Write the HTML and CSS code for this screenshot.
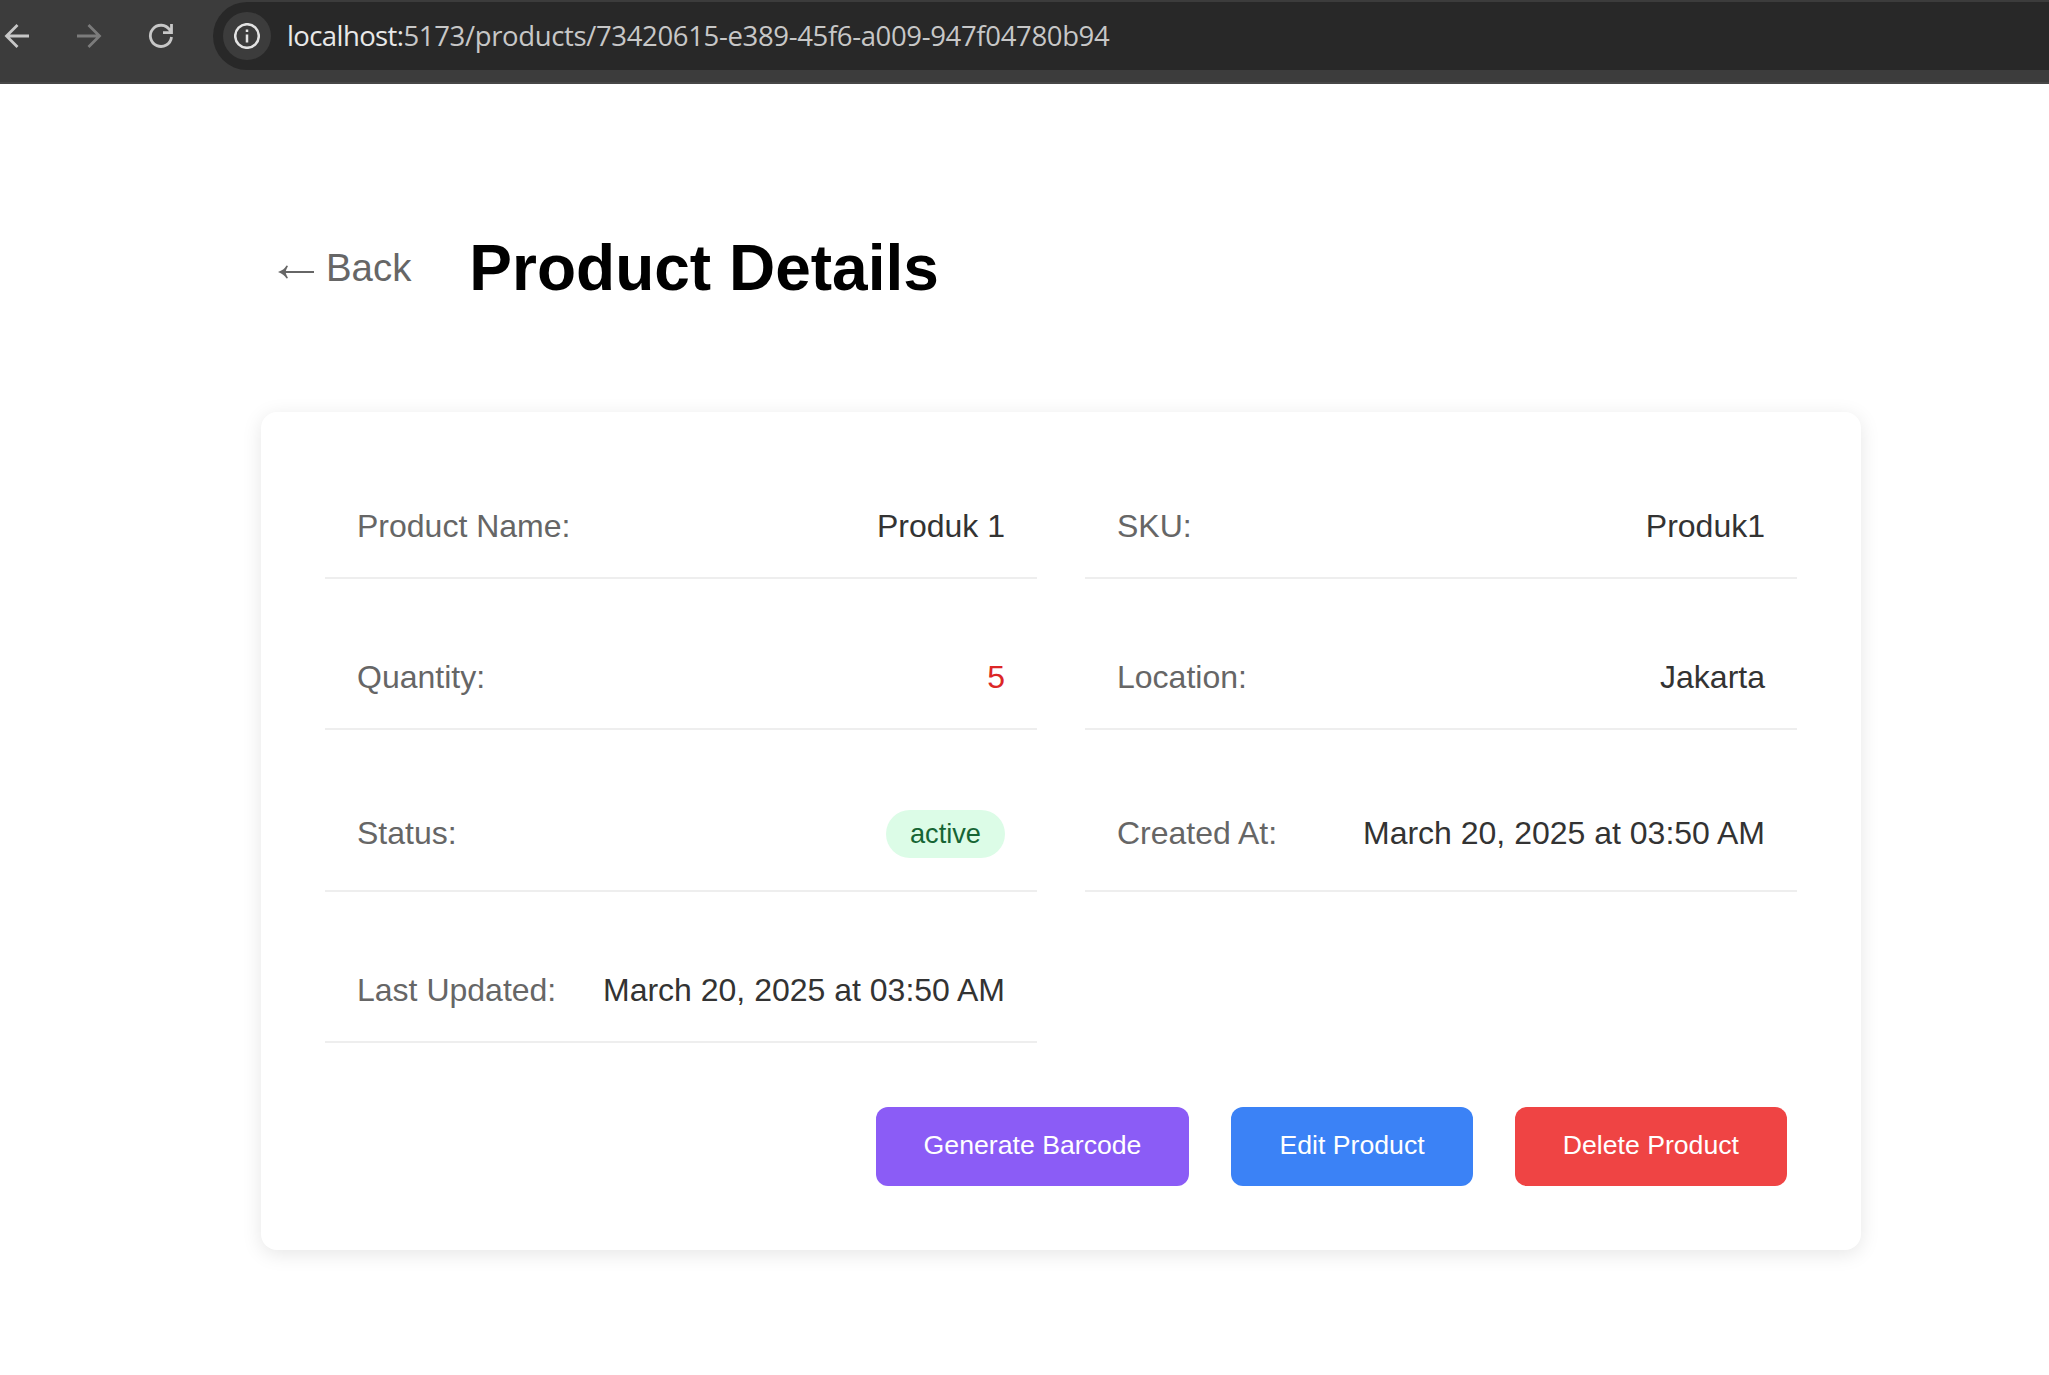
FILE: index.html
```html
<!DOCTYPE html>
<html lang="en">
<head>
<meta charset="utf-8">
<title>Product Details</title>
<link rel="stylesheet" href="styles.css">
</head>
<body>
<header class="toolbar">
  <nav class="nav">
    <svg class="nav-icon" viewBox="0 0 24 24"><path d="M24 12H2M12.5 1 1.5 12l11 11"/></svg>
    <svg class="nav-icon nav-icon-off" viewBox="0 0 24 24"><path d="M0 12h22M11.500 1l11 11-11 11"/></svg>
    <svg class="nav-icon" viewBox="0 0 24 24"><path d="M22.500 13A10.600 10.600 0 1 1 20.800 6L22.500 8.600M22.500 0v8.600H14"/></svg>
  </nav>
  <div class="omnibox">
    <span class="site-info">
      <svg class="info-icon" viewBox="0 0 26 26"><circle cx="13" cy="13" r="11.800"/><path d="M13 11.500V19.500M13 6.500V9"/></svg>
    </span>
    <span class="url"><span class="host">localhost:</span>5173/products/73420615-e389-45f6-a009-947f04780b94</span>
  </div>
</header>
<main class="page">
  <div class="page-head">
    <a class="back"><svg class="back-arrow" viewBox="0 0 38 14"><path class="shaft" d="M5 7h32"/><path class="tip" d="M1 7Q7 5 9.500 0.500L11 1Q9 4.500 8.500 7Q9 9.500 11 13L9.500 13.500Q7 9 1 7Z"/></svg>Back</a>
    <h1 class="title">Product Details</h1>
  </div>
  <section class="card">
    <div class="details">
      <div class="item"><span class="label">Product Name:</span><span class="value">Produk 1</span></div>
      <div class="item"><span class="label">SKU:</span><span class="value">Produk1</span></div>
      <div class="item"><span class="label">Quantity:</span><span class="value low">5</span></div>
      <div class="item"><span class="label">Location:</span><span class="value">Jakarta</span></div>
      <div class="item item-tall"><span class="label">Status:</span><span class="badge">active</span></div>
      <div class="item item-tall"><span class="label">Created At:</span><span class="value">March 20, 2025 at 03:50 AM</span></div>
      <div class="item"><span class="label">Last Updated:</span><span class="value">March 20, 2025 at 03:50 AM</span></div>
    </div>
    <div class="actions">
      <button class="btn btn-barcode">Generate Barcode</button>
      <button class="btn btn-edit">Edit Product</button>
      <button class="btn btn-delete">Delete Product</button>
    </div>
  </section>
</main>
</body>
</html>
```
FILE: styles.css
```css
* { box-sizing: border-box; }
body {
  margin: 0;
  min-height: 100vh;
  background: #fff;
  color: #000;
  font-family: "Liberation Sans", Arial, sans-serif;
}
.toolbar {
  display: flex;
  height: 84px;
  padding-top: 2px;
  background: #3c3c3c;
  border-bottom: 2px solid #474747;
}
.nav {
  display: flex;
  align-items: center;
  gap: 48px;
  width: 213px;
  height: 68px;
  padding-left: 5px;
}
.nav-icon {
  width: 24px;
  height: 24px;
  fill: none;
  stroke: #c7c7c7;
  stroke-width: 2.8;
  overflow: visible;
}
.nav-icon-off { stroke: #7b7b7b; }
.omnibox {
  display: flex;
  flex: 1;
  align-items: center;
  gap: 16px;
  height: 68px;
  padding-left: 10px;
  background: #282828;
  border-radius: 34px 0 0 34px;
}
.site-info {
  display: flex;
  align-items: center;
  justify-content: center;
  width: 48px;
  height: 48px;
  border-radius: 50%;
  background: #3c3c3c;
}
.info-icon {
  width: 26px;
  height: 26px;
  fill: none;
  stroke: #e3e3e3;
  stroke-width: 2.5;
}
.url {
  color: #c7c7c7;
  font-family: "Open Sans", "Noto Sans", sans-serif;
  font-size: 27.5px;
  line-height: 36px;
  letter-spacing: -0.35px;
  white-space: nowrap;
}
.host {
  color: #e8e8e8;
  letter-spacing: -0.6px;
}
.page {
  width: 1600px;
  margin-left: 261px;
  padding-top: 144px;
}
.page-head {
  display: flex;
  align-items: center;
  gap: 42px;
  height: 80px;
  margin-bottom: 104px;
}
.back {
  display: flex;
  align-items: center;
  gap: 11px;
  padding: 0 16px;
  color: #666;
  font-size: 38.4px;
  white-space: nowrap;
}
.back-arrow {
  width: 38px;
  height: 14px;
  margin-top: 7px;
}
.shaft {
  fill: none;
  stroke: #666;
  stroke-width: 2;
}
.tip { fill: #666; }
.title {
  margin: 0;
  font-size: 64px;
  font-weight: 700;
}
.card {
  padding: 64px;
  background: #fff;
  border-radius: 16px;
  box-shadow: 0 4px 20px rgba(0, 0, 0, 0.1);
}
.details {
  display: grid;
  grid-template-columns: 1fr 1fr;
  gap: 48px;
}
.item {
  display: flex;
  justify-content: space-between;
  align-items: center;
  padding: 32px;
  border-bottom: 2px solid #eee;
  font-size: 32px;
  line-height: 37px;
}
.label { color: #666; }
.value { color: #333; }
.item-tall .label,
.item-tall .value { margin-bottom: 1px; }
.low { color: #dc2626; }
.badge {
  padding: 8px 24px;
  border-radius: 24px;
  background: #dcfce7;
  color: #166534;
  font-size: 27.2px;
  line-height: 32px;
}
.actions {
  display: flex;
  justify-content: flex-end;
  gap: 42px;
  margin-top: 64px;
  padding-right: 10px;
}
.btn {
  padding: 23px 48px 25px;
  border: 0;
  border-radius: 12px;
  color: #fff;
  font-family: inherit;
  font-size: 26.667px;
  line-height: 31px;
  white-space: nowrap;
}
.btn-barcode { background: #8b5cf6; }
.btn-edit { background: #3b82f6; }
.btn-delete { background: #ef4444; }
```
